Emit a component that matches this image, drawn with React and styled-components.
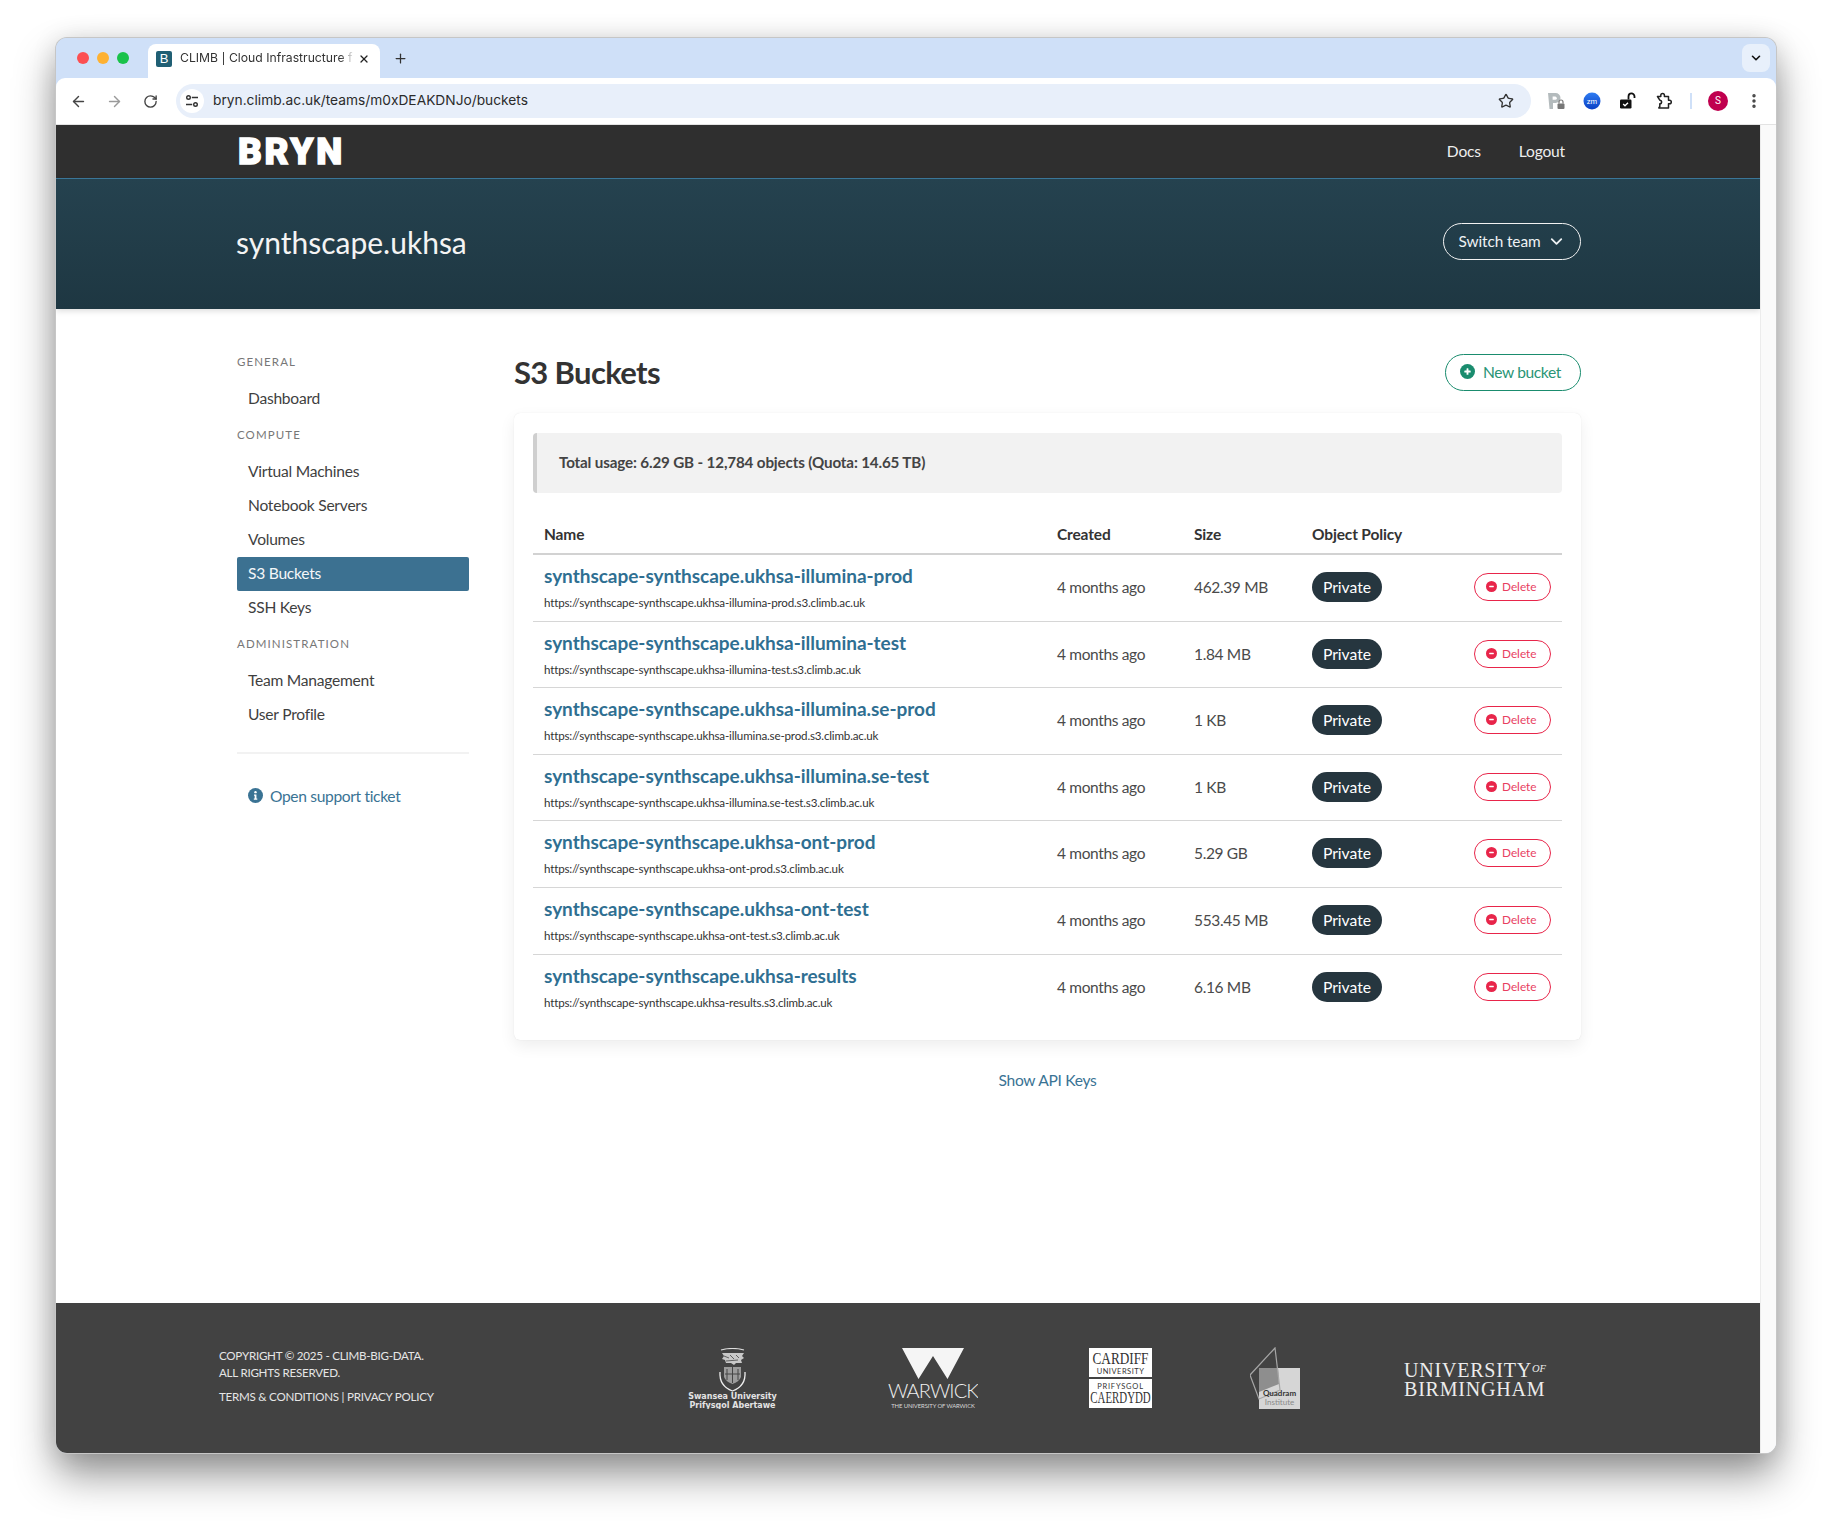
import React from 'react';
import styled, { createGlobalStyle } from 'styled-components';
import { ArrowLeft, ArrowRight, RotateCw, Star, Plus, X, ChevronDown, EllipsisVertical } from 'lucide-react';

const Global = createGlobalStyle`
  html, body { margin: 0; padding: 0; background: #fff; }
  body { font-family: Lato, "Liberation Sans", sans-serif; color: #333; }
  * { box-sizing: border-box; }
  a { text-decoration: none; }
`;

const Stage = styled.div`
  height: 1527px;
  padding: 38px 56px 74px;
  overflow: hidden;
`;
const Browser = styled.div`
  height: 1415px;
  display: flex;
  flex-direction: column;
  border-radius: 11px;
  background: #cfe0f8;
  box-shadow: 0 0 0 1px #c6c6c6, 0 22px 42px rgba(0,0,0,.42), 0 2px 26px rgba(0,0,0,.12);
  overflow: hidden;
`;
const TabStrip = styled.div`
  height: 40px;
  flex: none;
  display: flex;
  align-items: flex-end;
  padding-left: 21px;
  background: #cfe0f8;
`;
const Lights = styled.div`
  display: flex;
  gap: 8px;
  width: 71px;
  align-self: flex-start;
  margin-top: 14px;
`;
const Light = styled.span`
  width: 12px;
  height: 12px;
  border-radius: 50%;
  background: ${p => p.$c};
`;
const Tab = styled.div`
  width: 232px;
  height: 34px;
  background: #fff;
  border-radius: 8px 8px 0 0;
  display: flex;
  align-items: center;
  padding: 0 10px 5px 8px;
  font: 12.2px/1 Inter, sans-serif;
  color: #333;
`;
const Favicon = styled.span`
  width: 16px;
  height: 16px;
  flex: none;
  background: #205f74;
  color: #fff;
  border-radius: 2px;
  font: 13px/16px "Liberation Sans", sans-serif;
  text-align: center;
  margin-right: 8px;
`;
const TabTitle = styled.span`
  flex: 1;
  white-space: nowrap;
  mask-image: linear-gradient(90deg, #000 90%, transparent 98%);
`;
const NewTab = styled.span`
  display: flex;
  margin-left: 13px;
  align-self: center;
  color: #333;
`;
const TabMenu = styled.span`
  margin-left: auto;
  margin-right: 6px;
  align-self: center;
  width: 28px;
  height: 28px;
  border-radius: 8px;
  background: #e8f0fb;
  display: flex;
  align-items: center;
  justify-content: center;
`;
const Toolbar = styled.div`
  height: 47px;
  flex: none;
  background: #fff;
  border-bottom: 1px solid #e3e3e3;
  border-radius: 9px 9px 0 0;
  display: flex;
  align-items: center;
  padding: 0 4px;
`;
const Slot = styled.span`
  width: 36px;
  height: 30px;
  flex: none;
  display: flex;
  align-items: center;
  justify-content: center;
  color: ${p => p.$c || '#444'};
`;
const Omnibox = styled.div`
  flex: 1;
  height: 34px;
  margin: 0 7px 0 8px;
  border-radius: 17px;
  background: #e8effa;
  display: flex;
  align-items: center;
  padding: 0 17px 0 4px;
  font: 13.75px/1 Inter, sans-serif;
  color: #2b2b2b;
`;
const TuneBadge = styled.span`
  width: 24px;
  height: 24px;
  border-radius: 50%;
  background: #fff;
  display: flex;
  align-items: center;
  justify-content: center;
  margin-right: 9px;
`;
const Url = styled.span`
  flex: 1;
`;
const ToolSep = styled.span`
  width: 2px;
  height: 16px;
  flex: none;
  margin: 0 8px;
  background: #cfe0f8;
`;
const Avatar = styled.span`
  width: 20px;
  height: 20px;
  border-radius: 50%;
  background: #c0004f;
  color: #fff;
  font: 10px/20px Roboto, sans-serif;
  text-align: center;
`;
const Viewport = styled.div`
  flex: 1;
  display: flex;
  min-height: 0;
  background: #fff;
`;
const Page = styled.div`
  flex: 1;
  min-width: 0;
  display: flex;
  flex-direction: column;
`;
const Scrollbar = styled.div`
  width: 16px;
  flex: none;
  background: #fafafa;
  border-left: 1px solid #ececec;
`;
const TopNav = styled.header`
  height: 53px;
  flex: none;
  background: #2f2f2f;
  padding: 0 195px 0 182px;
  display: flex;
  align-items: center;
  justify-content: space-between;
`;
const Logo = styled.div`
  font: 900 37px/1 Roboto, sans-serif;
  letter-spacing: 2.6px;
  color: #fff;
  -webkit-text-stroke: 1.4px #fff;
`;
const NavLinks = styled.nav`
  display: flex;
  gap: 38px;
  padding-bottom: 2px;
`;
const NavLink = styled.a`
  color: #eee;
  font-size: 15.6px;
  letter-spacing: -.2px;
`;
const TeamBand = styled.section`
  height: 131px;
  flex: none;
  border-top: 1px solid #3a7698;
  background: linear-gradient(180deg, #25424f, #1e3742);
  box-shadow: 0 2px 6px rgba(0,0,0,.14);
  padding: 0 179px 5px 180px;
  display: flex;
  align-items: center;
  justify-content: space-between;
`;
const TeamName = styled.h2`
  margin: 0;
  font-size: 30px;
  font-weight: 400;
  color: #f4f4f4;
`;
const SwitchBtn = styled.button`
  width: 138px;
  height: 37px;
  border: 1px solid #f2f2f2;
  border-radius: 19px;
  background: transparent;
  color: #eef2f4;
  font: 400 15.4px Lato, sans-serif;
  letter-spacing: -.1px;
  display: flex;
  align-items: center;
  justify-content: center;
  gap: 6px;
  padding: 0 0 1px;
`;
const Body = styled.div`
  flex: 1;
  display: flex;
  gap: 45px;
  padding: 45px 179px 0 181px;
  min-height: 0;
`;
const Side = styled.aside`
  width: 232px;
  flex: none;
`;
const SideLabel = styled.div`
  height: 16px;
  font-size: 11.5px;
  line-height: 16px;
  letter-spacing: 1.1px;
  text-transform: uppercase;
  color: #777;
  margin: 11.2px 0 12.2px;
  &:first-child { margin-top: 0; }
`;
const SideItem = styled.a`
  display: block;
  height: 33.8px;
  line-height: 33.8px;
  padding-left: 11px;
  font-size: 15.6px;
  letter-spacing: -.25px;
  border-radius: 2px;
  color: ${p => p.$active ? '#f4f7f9' : '#3f3f3f'};
  background: ${p => p.$active ? '#3c7191' : 'transparent'};
`;
const SideRule = styled.hr`
  border: 0;
  height: 2px;
  margin: 21px 0 28.2px;
  background: #f2f2f2;
`;
const SupportLink = styled.a`
  display: flex;
  align-items: center;
  gap: 7px;
  padding-left: 11px;
  color: #3a7394;
  font-size: 15.6px;
  letter-spacing: -.35px;
  line-height: 26px;
`;
const Main = styled.main`
  flex: 1;
  min-width: 0;
`;
const MainHead = styled.div`
  height: 37px;
  display: flex;
  align-items: center;
  justify-content: space-between;
  margin-bottom: 22px;
`;
const Title = styled.h1`
  margin: 0 0 2px;
  font-size: 31px;
  font-weight: 700;
  letter-spacing: -.65px;
  color: #333;
`;
const NewBtn = styled.button`
  width: 136px;
  height: 37px;
  border: 1px solid #1a8c6e;
  border-radius: 19px;
  background: #fff;
  color: #2a9576;
  font: 400 15.6px Lato, sans-serif;
  letter-spacing: -.4px;
  display: flex;
  align-items: center;
  gap: 8px;
  padding: 0 0 2px 14px;
`;
const Card = styled.div`
  background: #fff;
  border-radius: 6px;
  box-shadow: 0 0 1px rgba(0,0,0,.12), 0 6px 16px rgba(0,0,0,.07);
  padding: 20px 19px 19px;
`;
const Notice = styled.div`
  height: 60px;
  display: flex;
  align-items: center;
  padding: 0 0 2px 22px;
  border-left: 4px solid #cfcfcf;
  border-radius: 4px;
  background: #f2f2f2;
  font-size: 15.2px;
  letter-spacing: -.15px;
  font-weight: 700;
  color: #444;
  margin-bottom: 20px;
`;
const Row = styled.div`
  display: grid;
  grid-template-columns: 513px 137px 118px 1fr auto;
  align-items: center;
  height: 66.6px;
  padding: 0 11px 1.5px;
  border-bottom: 1px solid #d6d6d6;
  font-size: 15.5px;
  letter-spacing: -.35px;
  color: #4a4a4a;
  &:last-child { border-bottom: 0; }
`;
const HeadRow = styled(Row)`
  height: 42px;
  border-bottom: 2px solid #d2d2d2;
  padding: 1px 11px 0;
  font-weight: 700;
  color: #333;
  font-size: 15.5px;
  letter-spacing: -.15px;
`;
const NameCell = styled.div`
  display: flex;
  flex-direction: column;
`;
const BucketLink = styled.a`
  font-size: 19px;
  line-height: 24px;
  font-weight: 700;
  letter-spacing: -.03px;
  color: #2f6f92;
  margin-top: .95px;
`;
const BucketUrl = styled.span`
  font-size: 11.6px;
  line-height: 16px;
  letter-spacing: -.17px;
  margin-top: 6.85px;
  color: #333;
`;
const Pill = styled.span`
  display: inline-flex;
  align-items: center;
  justify-content: center;
  width: 70px;
  height: 30px;
  border-radius: 15px;
  background: #26363f;
  color: #fff;
  font-size: 15.7px;
  letter-spacing: 0;
`;
const DeleteBtn = styled.button`
  width: 77px;
  height: 28px;
  border: 1px solid #e8254a;
  border-radius: 14px;
  background: #fff;
  color: #e8405f;
  font: 400 11.8px Lato, sans-serif;
  display: flex;
  align-items: center;
  gap: 5px;
  padding: 0 0 1px 11px;
`;
const ApiKeys = styled.a`
  display: block;
  text-align: center;
  margin-top: 28px;
  color: #3a7394;
  font-size: 15.6px;
  letter-spacing: -.3px;
  line-height: 24px;
`;
const Footer = styled.footer`
  height: 150px;
  flex: none;
  background: #424242;
  display: flex;
  padding: 45px 0 0 163px;
`;
const FooterText = styled.div`
  width: 469px;
  font-size: 11.6px;
  letter-spacing: -.25px;
  line-height: 17px;
  color: #e6e6e6;
  text-transform: uppercase;
  margin-top: -1px;
`;
const FooterTerms = styled.div`
  margin-top: 7px;
`;
const LogoRow = styled.div`
  display: grid;
  grid-template-columns: 200px 201px 161px 154px 142px;
`;
const Birmingham = styled.div`
  font: 400 20px/19px "Liberation Serif", serif;
  letter-spacing: .8px;
  color: #ececec;
  text-transform: uppercase;
  margin-top: 11px;
  white-space: nowrap;
`;
const BirmOf = styled.span`
  font-size: 10.5px;
  font-style: italic;
  vertical-align: 5px;
  letter-spacing: 0;
`;

const rows = [
  ['illumina-prod', '462.39 MB'],
  ['illumina-test', '1.84 MB'],
  ['illumina.se-prod', '1 KB'],
  ['illumina.se-test', '1 KB'],
  ['ont-prod', '5.29 GB'],
  ['ont-test', '553.45 MB'],
  ['results', '6.16 MB'],
];

const CircleIcon = ({ size, color, kind }) => (
  <svg width={size} height={size} viewBox="0 0 16 16" style={{ flex: 'none' }}>
    <circle cx="8" cy="8" r="8" fill={color} />
    {kind !== 'info' && <rect x="4.6" y="7" width="6.8" height="2" rx=".6" fill="#fff" />}
    {kind === 'plus' && <rect x="7" y="4.6" width="2" height="6.8" rx=".6" fill="#fff" />}
    {kind === 'info' && <><circle cx="8" cy="4.4" r="1.3" fill="#fff" /><path d="M6.4 6.9h2.6v4.2h.9v1.3H6.2v-1.3h.9V8.2h-.7z" fill="#fff" /></>}
  </svg>
);

const TuneIcon = () => (
  <svg width="14" height="14" viewBox="0 0 14 14" fill="none" stroke="#333" strokeWidth="1.4">
    <circle cx="3.5" cy="3.5" r="1.8" />
    <path d="M6.800 3.500H13" />
    <path d="M1 10.500h6.200" />
    <circle cx="10.500" cy="10.500" r="1.800" />
  </svg>
);
const PassIcon = () => (
  <svg width="18" height="18" viewBox="0 0 18 18">
    <path d="M1 1h7.500a5 5 0 0 1 0 10H6v6H2.500z" fill="#b4bbbd" />
    <path d="M5.600 4.600h2.600a1.600 1.600 0 0 1 0 3.200H5.600z" fill="#fff" />
    <rect x="10.500" y="11.500" width="7" height="5.600" rx="1" fill="#777" />
    <path d="M12 11.500V10a2 2 0 0 1 4 0v1.500" fill="none" stroke="#777" strokeWidth="1.200" />
  </svg>
);
const ZmIcon = () => (
  <svg width="18" height="18" viewBox="0 0 18 18">
    <defs><linearGradient id="zmg" x1="0" y1="0" x2="0" y2="1"><stop offset="0" stopColor="#2f7df2" /><stop offset="1" stopColor="#0a3fc4" /></linearGradient></defs>
    <circle cx="9" cy="9" r="8.500" fill="url(#zmg)" />
    <text x="9" y="11.600" textAnchor="middle" fontFamily="Roboto, sans-serif" fontSize="7.500" fill="#fff">zm</text>
  </svg>
);
const LockIcon = () => (
  <svg width="18" height="18" viewBox="0 0 18 18">
    <rect x="1" y="7.500" width="11.500" height="9" rx="1.200" fill="#111" />
    <path d="M9.500 7.500V4.400a3 3 0 0 1 6 0v1.600" fill="none" stroke="#111" strokeWidth="1.800" />
    <path d="M4.200 12l1.800 1.800 3-3" fill="none" stroke="#fff" strokeWidth="1.400" />
  </svg>
);
const ExtensionIcon = () => (
  <svg width="18" height="18" viewBox="0 0 18 18" fill="none" stroke="#222" strokeWidth="1.500" strokeLinejoin="round">
    <path d="M2.500 4.500h3.300V3.200a1.800 1.800 0 0 1 3.600 0v1.300h4.100v3.700h1a1.800 1.800 0 0 1 0 3.600h-1V16H3.800l1-1.500V11.800a1.800 1.800 0 0 0 0-3.600z" />
  </svg>
);
const SwanseaCrest = () => (
  <svg width="89" height="61" viewBox="0 0 89 61" style={{ display: 'block' }}>
    <path d="M33 2q11.500-3 23 0" stroke="#ddd" strokeWidth="1.200" fill="none" />
    <path d="M34 5h22l-2 3 2 2-3 2 1 3h-6l-2 2-3-2h-5l-1-3-3-1 2-3z" fill="#c8c8c8" />
    <path d="M36 8l5 2M42 7l4 4M48 7l3 3M38 13l12-1" stroke="#444" strokeWidth=".8" />
    <path d="M36 19h17v10q-2 5-8.500 7-6.500-2-8.500-7z" fill="#9c9c9c" />
    <path d="M39 21v11M44.500 19v16M50 21v11M37 26h15" stroke="#444" strokeWidth="1" />
    <path d="M32 24q-1 14 12.500 19Q58 38 57 24" stroke="#eee" strokeWidth="1.300" fill="none" />
    <text x="44.500" y="50.500" textAnchor="middle" fontFamily="'DejaVu Sans', sans-serif" fontWeight="700" fontSize="8" fill="#e4e4e4">Swansea University</text>
    <text x="44.500" y="60" textAnchor="middle" fontFamily="'DejaVu Sans', sans-serif" fontWeight="700" fontSize="8" fill="#e4e4e4">Prifysgol Abertawe</text>
  </svg>
);
const WarwickLogo = () => (
  <svg width="90" height="61" viewBox="0 0 90 61" style={{ display: 'block' }}>
    <path d="M14 0h62L59.500 31 45 8 30.500 31z" fill="#f5f5f5" />
    <text x="45" y="50" textAnchor="middle" fontFamily="Lato, sans-serif" fontWeight="300" fontSize="20" letterSpacing="-.9" fill="#f0f0f0">WARWICK</text>
    <text x="45" y="59.500" textAnchor="middle" fontFamily="Lato, sans-serif" fontSize="5.900" letterSpacing="-.1" fill="#d8d8d8">THE UNIVERSITY OF WARWICK</text>
  </svg>
);
const CardiffLogo = () => (
  <svg width="63" height="60" viewBox="0 0 63 60" style={{ display: 'block' }}>
    <rect x="0" y="0" width="63" height="29" fill="#fff" />
    <rect x="0" y="31" width="63" height="29" fill="#fff" />
    <text transform="translate(31.500 16) scale(.78 1)" textAnchor="middle" fontFamily="'Liberation Serif', serif" fontSize="17" fill="#333">CARDIFF</text>
    <text x="31.500" y="25.500" textAnchor="middle" fontFamily="Lato, sans-serif" fontSize="7.500" letterSpacing=".5" fill="#333">UNIVERSITY</text>
    <text x="31.500" y="41" textAnchor="middle" fontFamily="Lato, sans-serif" fontSize="7.500" letterSpacing=".8" fill="#333">PRIFYSGOL</text>
    <text transform="translate(31.500 55) scale(.68 1)" textAnchor="middle" fontFamily="'Liberation Serif', serif" fontSize="16" fill="#333">CAERDYDD</text>
  </svg>
);
const QuadramLogo = () => (
  <svg width="52" height="62" viewBox="0 0 52 62" style={{ display: 'block', marginTop: '-1px' }}>
    <rect x="9" y="21" width="41" height="41" fill="#d6d6d6" />
    <path d="M9 21h19l1 16-20 8z" fill="#8e8e8e" />
    <path d="M25 1L0 28l9 24 21-9z" fill="none" stroke="#a6a6a6" strokeWidth="1.200" />
    <text x="29.500" y="49" textAnchor="middle" fontFamily="Lato, sans-serif" fontWeight="700" fontSize="8" fill="#333">Quadram</text>
    <text x="29.500" y="58" textAnchor="middle" fontFamily="Lato, sans-serif" fontSize="8" fill="#8a8a8a">Institute</text>
  </svg>
);

export default function App() {
  return (
    <Stage>
      <Global />
      <Browser>
        <TabStrip>
          <Lights>
            <Light $c="#fc4f52" />
            <Light $c="#feb132" />
            <Light $c="#19c24a" />
          </Lights>
          <Tab>
            <Favicon>B</Favicon>
            <TabTitle>CLIMB | Cloud Infrastructure f</TabTitle>
            <X size={12} strokeWidth={2.6} color="#222" />
          </Tab>
          <NewTab><Plus size={15} strokeWidth={2} /></NewTab>
          <TabMenu><ChevronDown size={14} strokeWidth={2.8} color="#111" /></TabMenu>
        </TabStrip>
        <Toolbar>
          <Slot><ArrowLeft size={17} strokeWidth={2} /></Slot>
          <Slot $c="#9a9a9a"><ArrowRight size={17} strokeWidth={2} /></Slot>
          <Slot><RotateCw size={15} strokeWidth={2.2} /></Slot>
          <Omnibox>
            <TuneBadge><TuneIcon /></TuneBadge>
            <Url>bryn.climb.ac.uk/teams/m0xDEAKDNJo/buckets</Url>
            <Star size={16} strokeWidth={2} color="#333" />
          </Omnibox>
          <Slot><PassIcon /></Slot>
          <Slot><ZmIcon /></Slot>
          <Slot><LockIcon /></Slot>
          <Slot><ExtensionIcon /></Slot>
          <ToolSep />
          <Slot><Avatar>S</Avatar></Slot>
          <Slot><EllipsisVertical size={18} strokeWidth={2.6} color="#444" /></Slot>
        </Toolbar>
        <Viewport>
          <Page>
            <TopNav>
              <Logo>BRYN</Logo>
              <NavLinks>
                <NavLink>Docs</NavLink>
                <NavLink>Logout</NavLink>
              </NavLinks>
            </TopNav>
            <TeamBand>
              <TeamName>synthscape.ukhsa</TeamName>
              <SwitchBtn>Switch team <ChevronDown size={19} strokeWidth={2.3} /></SwitchBtn>
            </TeamBand>
            <Body>
              <Side>
                <SideLabel>General</SideLabel>
                <SideItem>Dashboard</SideItem>
                <SideLabel>Compute</SideLabel>
                <SideItem>Virtual Machines</SideItem>
                <SideItem>Notebook Servers</SideItem>
                <SideItem>Volumes</SideItem>
                <SideItem $active>S3 Buckets</SideItem>
                <SideItem>SSH Keys</SideItem>
                <SideLabel>Administration</SideLabel>
                <SideItem>Team Management</SideItem>
                <SideItem>User Profile</SideItem>
                <SideRule />
                <SupportLink><CircleIcon size={15} color="#3a7394" kind="info" />Open support ticket</SupportLink>
              </Side>
              <Main>
                <MainHead>
                  <Title>S3 Buckets</Title>
                  <NewBtn><CircleIcon size={15} color="#1a8c6e" kind="plus" />New bucket</NewBtn>
                </MainHead>
                <Card>
                  <Notice>Total usage: 6.29 GB - 12,784 objects (Quota: 14.65 TB)</Notice>
                  <HeadRow>
                    <span>Name</span>
                    <span>Created</span>
                    <span>Size</span>
                    <span>Object Policy</span>
                    <span />
                  </HeadRow>
                  {rows.map(([slug, size]) => (
                    <Row key={slug}>
                      <NameCell>
                        <BucketLink>synthscape-synthscape.ukhsa-{slug}</BucketLink>
                        <BucketUrl>https://synthscape-synthscape.ukhsa-{slug}.s3.climb.ac.uk</BucketUrl>
                      </NameCell>
                      <span>4 months ago</span>
                      <span>{size}</span>
                      <span><Pill>Private</Pill></span>
                      <DeleteBtn><CircleIcon size={11} color="#e8254a" kind="minus" />Delete</DeleteBtn>
                    </Row>
                  ))}
                </Card>
                <ApiKeys>Show API Keys</ApiKeys>
              </Main>
            </Body>
            <Footer>
              <FooterText>
                Copyright © 2025 - CLIMB-BIG-DATA.<br />
                All rights reserved.
                <FooterTerms>Terms &amp; Conditions | Privacy Policy</FooterTerms>
              </FooterText>
              <LogoRow>
                <SwanseaCrest />
                <WarwickLogo />
                <CardiffLogo />
                <QuadramLogo />
                <Birmingham>University<BirmOf>of</BirmOf><br />Birmingham</Birmingham>
              </LogoRow>
            </Footer>
          </Page>
          <Scrollbar />
        </Viewport>
      </Browser>
    </Stage>
  );
}
